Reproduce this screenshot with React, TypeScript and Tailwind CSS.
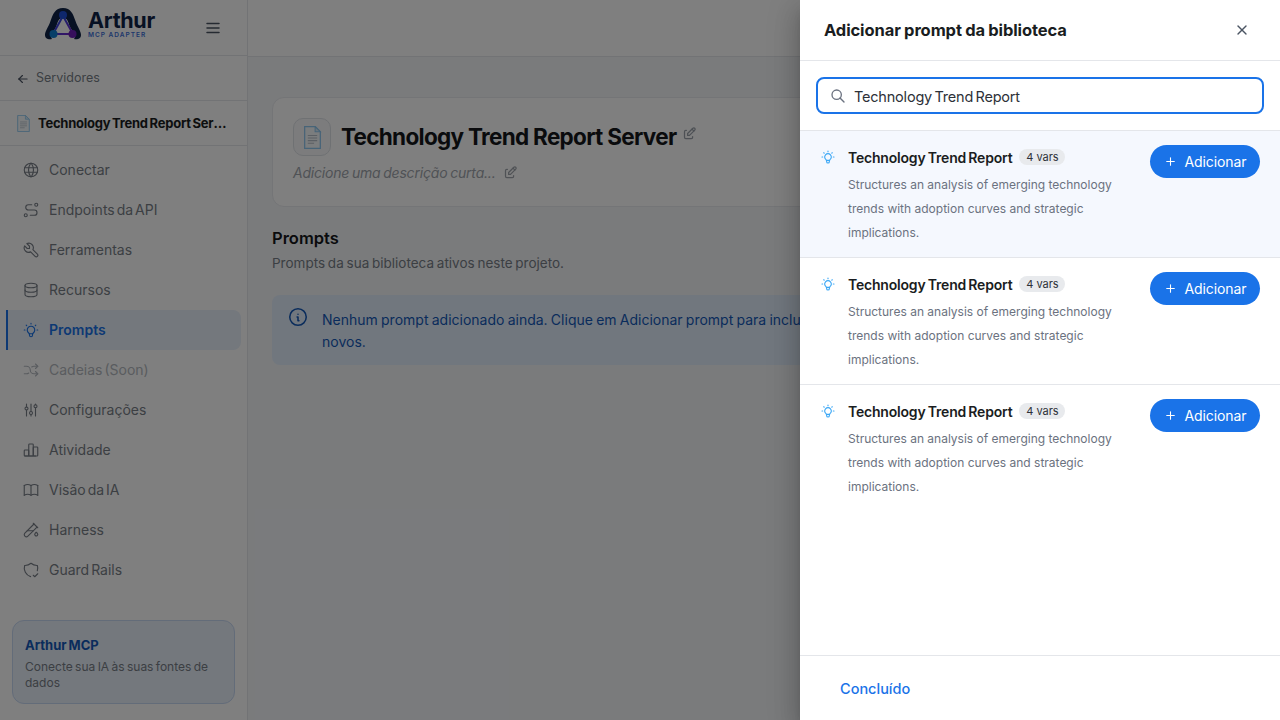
import {
  TbAdjustments, TbArrowLeft, TbArrowsShuffle, TbBook, TbBulb, TbChartBar, TbDatabase, TbEdit,
  TbInfoCircle, TbMenu2, TbPlus, TbRoute, TbSearch, TbShieldCheck, TbTestPipe, TbTool, TbWorld, TbX,
} from 'react-icons/tb'

const NAV = [
  { label: 'Conectar', icon: TbWorld },
  { label: 'Endpoints da API', icon: TbRoute },
  { label: 'Ferramentas', icon: TbTool },
  { label: 'Recursos', icon: TbDatabase },
  { label: 'Prompts', icon: TbBulb, active: true },
  { label: 'Cadeias (Soon)', icon: TbArrowsShuffle, disabled: true },
  { label: 'Configurações', icon: TbAdjustments },
  { label: 'Atividade', icon: TbChartBar },
  { label: 'Visão da IA', icon: TbBook },
  { label: 'Harness', icon: TbTestPipe },
  { label: 'Guard Rails', icon: TbShieldCheck },
]

function DocIcon({ size }: { size: number }) {
  return (
    <svg width={size} height={size} viewBox="4 1 17 22" className="shrink-0">
      <path d="M5 1.500h10l5 5v16H5z" fill="#f6fafd" stroke="#8fc8f0" strokeWidth="1.200" />
      <path d="M15 1.500v5h5z" fill="#d6e9f7" stroke="#8fc8f0" strokeWidth="1" />
      <path d="M8 10h9M8 12.500h9M8 15h9M8 17.500h6" stroke="#b6bfc8" strokeWidth="1" />
    </svg>
  )
}

function Logo() {
  return (
    <div className="flex items-center gap-[6px] -mt-[8px]">
      <svg width="38" height="34" viewBox="0 0 38 34">
        <defs>
          <linearGradient id="tri" x1="0" y1="0" x2="1" y2="1">
            <stop offset="0" stopColor="#1a56e8" />
            <stop offset="1" stopColor="#7a22c8" />
          </linearGradient>
        </defs>
        <path d="M19 1C11 1 9 7 6.500 14C4.500 20 1 24 1 28C1 32 5 33 8 32C5 28 9 26 12 20C14 15 14 11 19 11C24 11 24 15 26 20C29 26 33 28 30 32C33 33 37 32 37 28C37 24 33.500 20 31.500 14C29 7 27 1 19 1Z" fill="#0f2346" />
        <path d="M19 9L9 27H29Z" fill="none" stroke="url(#tri)" strokeWidth="2" />
        <circle cx="19" cy="8" r="4" fill="#1d4ed8" />
        <circle cx="9.500" cy="27" r="4" fill="#0f7fd0" />
        <circle cx="28.500" cy="27" r="4" fill="#6d1fb8" />
      </svg>
      <div className="flex flex-col">
        <span className="text-[21.500px] leading-[22px] font-bold tracking-[-0.3px] text-[#0f2346]">Arthur</span>
        <span className="text-[6.500px] leading-[8px] font-semibold tracking-[1px] text-[#3b6fd8]">MCP ADAPTER</span>
      </div>
    </div>
  )
}

function Sidebar() {
  return (
    <aside className="w-[248px] shrink-0 h-full bg-white border-r border-[#e4e6ea] flex flex-col">
      <div className="h-[56px] shrink-0 flex items-center border-b border-[#e4e6ea] pl-[44px]">
        <Logo />
        <TbMenu2 size={18} className="ml-[49px] text-[#4b5563]" />
      </div>
      <div className="h-[45px] shrink-0 flex items-center gap-[6px] pl-[16px] pt-[1px] border-b border-[#e4e6ea] text-[12.500px] text-[#787e87]">
        <TbArrowLeft size={14} className="text-[#4b5563]" />
        Servidores
      </div>
      <div className="h-[45px] shrink-0 flex items-center gap-[6px] pl-[15px] pr-[17px] pt-[1px] border-b border-[#e4e6ea]">
        <DocIcon size={17} />
        <span className="truncate text-[13px] font-bold text-[#1a1d21] tracking-[-0.25px] [word-spacing:-1px]">Technology Trend Report Server</span>
      </div>
      <nav className="flex flex-col pt-[4px] pl-[6px] pr-[6px]">
        {NAV.map(n => {
          const Icon = n.icon
          return (
            <div
              key={n.label}
              className={`h-[40px] flex items-center gap-[9px] pl-[14px] text-[14px] [word-spacing:-2px] rounded-r-[8px] border-l-2 ${
                n.active
                  ? 'border-[#1a73e8] bg-[#e8f0fb] text-[#1a73e8] font-semibold'
                  : n.disabled
                    ? 'border-transparent text-[#b4b9c0]'
                    : 'border-transparent text-[#787e87]'
              }`}
            >
              <Icon size={18} strokeWidth={1.5} className="shrink-0" />
              <span className="pb-[2px]">{n.label}</span>
            </div>
          )
        })}
      </nav>
      <div className="mt-auto mx-[12px] mb-[16px] h-[84px] rounded-[12px] border border-[#c7d8f2] bg-[#e8f0fb] px-[12px] pt-[14px]">
        <div className="text-[13px] leading-[20px] font-bold text-[#1459b8] [word-spacing:-1px]">Arthur MCP</div>
        <div className="text-[12px] leading-[16px] text-[#787e87] mt-[4px] [word-spacing:-1px]">Conecte sua IA às suas fontes de dados</div>
      </div>
    </aside>
  )
}

function Main() {
  return (
    <main className="flex-1 min-w-0 h-full bg-[#f4f6f9] flex flex-col">
      <div className="h-[57px] shrink-0 bg-white border-b border-[#e4e6ea]" />
      <div className="px-[24px] pt-[40px]">
        <div className="h-[110px] rounded-[12px] border border-[#e8eaee] bg-white px-[20px] pt-[20px]">
          <div className="flex items-center gap-[10px]">
            <div className="w-[38px] h-[38px] rounded-[10px] border border-[#dfe2e7] bg-[#f8f9fb] flex items-center justify-center">
              <DocIcon size={23} />
            </div>
            <span className="text-[22.500px] leading-[38px] font-bold tracking-[-0.7px] text-[#14171a]">Technology Trend Report Server</span>
            <TbEdit size={15} className="text-[#9aa1aa] -mt-[8px] -ml-[4px]" />
          </div>
          <div className="flex items-center gap-[7px] mt-[6px] text-[14px] italic tracking-[-0.2px] [word-spacing:-1px] text-[#a0a5ac]">
            Adicione uma descrição curta...
            <TbEdit size={15} />
          </div>
        </div>
        <h2 className="mt-[19px] text-[16.500px] leading-[24px] font-semibold text-[#14171a]">Prompts</h2>
        <p className="mt-[3px] text-[13.500px] leading-[20px] text-[#787e87] [word-spacing:-1px]">Prompts da sua biblioteca ativos neste projeto.</p>
        <div className="mt-[22px] h-[70px] rounded-[8px] bg-[#e3eefc] flex pl-[16px] pr-[24px] pt-[12px] gap-[13px] text-[#1459b8]">
          <TbInfoCircle size={22} strokeWidth={1.7} className="shrink-0 -ml-[1px] -mt-[1px]" />
          <p className="text-[14px] leading-[22px] pt-[2px] [word-spacing:-0.7px]">
            Nenhum prompt adicionado ainda. Clique em Adicionar prompt para incluir prompts da biblioteca ou criar
            <br />
            novos.
          </p>
        </div>
      </div>
    </main>
  )
}

function PromptRow({ highlight, last }: { highlight?: boolean; last?: boolean }) {
  return (
    <div className={`h-[127px] shrink-0 flex pl-[20px] pr-[20px] ${last ? '' : 'border-b border-[#e4e6ea]'} ${highlight ? 'bg-[#f5f8fe]' : ''}`}>
      <TbBulb size={16} strokeWidth={1.7} className="shrink-0 mt-[18px] text-[#3ba7f5]" />
      <div className="ml-[12px] w-[280px] pt-[15px]">
        <div className="flex items-center gap-[7px] h-[22px]">
          <span className="text-[14px] font-semibold tracking-[-0.2px] [word-spacing:-1px] text-[#1a1d21]">Technology Trend Report</span>
          <span className="h-[16px] w-[46px] text-center rounded-full bg-[#e8eaed] text-[11px] leading-[16px] text-[#2d3138]">4 vars</span>
        </div>
        <p className="mt-[5px] text-[12px] leading-[24px] text-[#6b7280]">Structures an analysis of emerging technology trends with adoption curves and strategic implications.</p>
      </div>
      <div className="ml-auto mt-[14px] h-[33px] w-[110px] rounded-full bg-[#1a73e8] text-white flex items-center justify-center gap-[8px] text-[14px] tracking-[-0.1px] shrink-0">
        <TbPlus size={13} />
        Adicionar
      </div>
    </div>
  )
}

function Drawer() {
  return (
    <div className="absolute top-0 right-0 h-full w-[480px] bg-white flex flex-col shadow-[0_8px_10px_-5px_rgba(0,0,0,0.2),0_16px_24px_2px_rgba(0,0,0,0.14),0_6px_30px_5px_rgba(0,0,0,0.12)]">
      <div className="h-[61px] shrink-0 border-b border-[#e4e6ea] flex items-center justify-between pl-[24px] pr-[30px]">
        <h3 className="text-[16.500px] pt-[1px] font-bold tracking-[-0.1px] [word-spacing:-0.5px] text-[#1a1d21]">Adicionar prompt da biblioteca</h3>
        <TbX size={16} className="text-[#4b5563]" />
      </div>
      <div className="h-[70px] shrink-0 border-b border-[#e4e6ea] flex items-center px-[16px]">
        <div className="w-full h-[37px] rounded-[8px] border-2 border-[#1a73e8] flex items-center pl-[12px] gap-[8px]">
          <TbSearch size={16} className="text-[#6b7280]" />
          <span className="text-[14.500px] pt-[2px] tracking-[-0.2px] [word-spacing:-1.500px] text-[#2d3138]">Technology Trend Report</span>
        </div>
      </div>
      <div className="flex-1 flex flex-col min-h-0">
        <PromptRow highlight />
        <PromptRow />
        <PromptRow last />
      </div>
      <div className="h-[65px] shrink-0 border-t border-[#e4e6ea] flex items-center pl-[40px] pt-[1px] text-[14.500px] font-medium text-[#1a73e8]">
        Concluído
      </div>
    </div>
  )
}

export default function App() {
  return (
    <div className="relative w-[1280px] h-[720px] overflow-hidden flex font-['Inter',sans-serif]">
      <Sidebar />
      <Main />
      <div className="absolute inset-0 bg-black/50" />
      <Drawer />
    </div>
  )
}
